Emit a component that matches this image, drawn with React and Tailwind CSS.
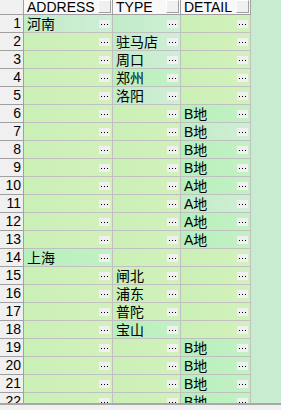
import React from 'react'

const columns = [
  { key: 'address', title: 'ADDRESS', w: 'w-[89px]' },
  { key: 'type', title: 'TYPE', w: 'w-[68px]' },
  { key: 'detail', title: 'DETAIL', w: 'w-[70px]' },
]

const rows = [
  ['河南', '', ''],
  ['', '驻马店', ''],
  ['', '周口', ''],
  ['', '郑州', ''],
  ['', '洛阳', ''],
  ['', '', 'B地'],
  ['', '', 'B地'],
  ['', '', 'B地'],
  ['', '', 'B地'],
  ['', '', 'A地'],
  ['', '', 'A地'],
  ['', '', 'A地'],
  ['', '', 'A地'],
  ['上海', '', ''],
  ['', '闸北', ''],
  ['', '浦东', ''],
  ['', '普陀', ''],
  ['', '宝山', ''],
  ['', '', 'B地'],
  ['', '', 'B地'],
  ['', '', 'B地'],
  ['', '', 'B地'],
]

// cell fills, picked by hand from the screenshot (y = yellowish, g = green, p = pale)
const fills = {
  y: 'bg-linear-to-r from-[#caf0b6] to-[#d3f0bc]',
  g: 'bg-linear-to-r from-[#b6f0bc] to-[#c4f0c4]',
  p: 'bg-linear-to-r from-[#c2ecc8] to-[#cfeed6]',
}

const pattern = [
  'ppy', 'ypy', 'ypy', 'ygy', 'ypy', 'yyg', 'yyp', 'yyg', 'yyg', 'yyg', 'yyp',
  'yyg', 'yyg', 'gyy', 'yyy', 'yyy', 'yyy', 'ygy', 'yyg', 'yyg', 'yyg', 'yyg',
]

function Dots() {
  return (
    <div className="absolute right-[2px] top-[5px] flex h-[8px] w-[11px] items-center justify-center gap-[2px] bg-[#f0f0f0]">
      <span className="h-px w-px bg-black" />
      <span className="h-px w-px bg-black" />
      <span className="h-px w-px bg-black" />
    </div>
  )
}

export default function App() {
  return (
    <div
      className="flex h-[410px] w-[281px] flex-col overflow-hidden bg-[#c8ecd0] text-black"
      style={{ fontFamily: '"Liberation Sans", "Noto Sans CJK SC", sans-serif' }}
    >
      <div className="flex-1 overflow-hidden">
        {/* header */}
        <div className="flex h-[15px]">
          <div className="h-full w-[24px] border-r border-b border-[#a0a0a0] bg-[#f0f0f0]" />
          {columns.map((c) => (
            <div
              key={c.key}
              className={`relative h-full ${c.w} border-r border-b border-[#a0a0a0] bg-[#f8f8f8] pl-[3px] text-[14px] leading-[14px]`}
            >
              {c.title}
              <div className="absolute right-[1px] top-0 h-[13px] w-[13px] border-t border-l border-white border-r-[#a0a0a0] border-b-[#a0a0a0] border-r border-b bg-[#f0f0f0]" />
            </div>
          ))}
        </div>

        {/* body */}
        {rows.map((r, i) => (
          <div key={i} className="flex h-[18px]">
            <div className="h-full w-[24px] border-r border-b border-[#a0a0a0] bg-[#f0f0f0] pr-[2px] text-right text-[14px] leading-[17px]">
              {i + 1}
            </div>
            {r.map((text, j) => (
              <div
                key={j}
                className={`relative h-full ${columns[j].w} border-r border-b border-[#c0c0c0] ${fills[pattern[i][j]]} pl-[3px] text-[14px] leading-[18px]`}
              >
                {text}
                <Dots />
              </div>
            ))}
          </div>
        ))}
      </div>

      {/* scrollbar edge */}
      <div className="h-[7px] border-t-2 border-[#a8a8a8] bg-[#f0f0f0]" />
    </div>
  )
}
